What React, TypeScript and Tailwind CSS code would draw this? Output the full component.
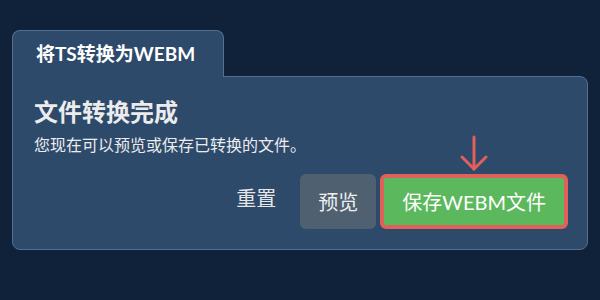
export default function App() {
  return (
    <div
      className="w-[600px] h-[300px] bg-[#10223a] pt-[30px] px-3"
      style={{ fontFamily: 'Lato, "Noto Sans CJK SC", sans-serif' }}
    >
      <div className="flex flex-col">
        <div className="relative z-10 -mb-px self-start h-[47px] pl-[23px] pr-[28px] flex items-center bg-[#2d4a6b] border border-b-0 border-[#566f8c] rounded-t-lg">
          <span className="text-[19px] font-bold text-white">将TS转换为WEBM</span>
        </div>
        <div className="h-[174px] bg-[#2d4a6b] border border-[#566f8c] rounded-lg rounded-tl-none pt-[19px] pl-[21px] pr-[19px]">
          <h1 className="text-[24px] leading-8 font-semibold text-[#ececec]">文件转换完成</h1>
          <p className="mt-[5px] text-[16px] leading-6 text-[#ececec]">您现在可以预览或保存已转换的文件。</p>
          <div className="mt-[17px] flex justify-end items-center gap-[4px]">
            <button className="h-[55px] px-[20px] pb-2 text-[20px] text-[#e6e6e6]">重置</button>
            <button className="h-[55px] px-[18px] rounded-md bg-[#4f6071] text-[20px] text-[#eeeeee]">预览</button>
            <div className="relative">
              <svg
                className="absolute bottom-full left-1/2 -translate-x-1/2 mb-[3px]"
                width="30"
                height="36"
                viewBox="0 0 30 36"
                fill="none"
                stroke="#e0605a"
                strokeWidth="3"
                strokeLinecap="round"
                strokeLinejoin="round"
              >
                <path d="M15 2 V34" />
                <path d="M3 22 L15 34 L27 22" />
              </svg>
              <button className="h-[55px] px-[18px] rounded-md bg-[#5cb85c] border-4 border-[#e0605a] text-[20px] text-white">
                保存WEBM文件
              </button>
            </div>
          </div>
        </div>
      </div>
    </div>
  );
}
